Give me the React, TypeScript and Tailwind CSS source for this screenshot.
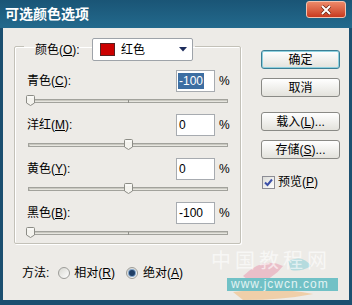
import React from "react";

const font = { fontFamily: '"Liberation Sans", "Noto Sans CJK SC", sans-serif' };

interface rowprops {
  name: string;
  keyChar: string;
  value: number;
  selected?: boolean;
}

const Thumb = () => (
  <svg width="9" height="11" viewBox="0 0 9 11" className="absolute top-0">
    <path d="M0.5 1.5 Q0.5 0.5 1.5 0.5 H7.5 Q8.5 0.5 8.5 1.5 V8 L4.5 10.5 L0.5 8 Z" fill="#f4f3ee" stroke="#8c8c86" />
    <path d="M1.5 2 H7.5" stroke="#ffffff" />
  </svg>
);

const SliderRow = ({ name, keyChar, value, selected }: rowprops) => {
  return (
    <div className="flex flex-col">
      <div className="flex items-center h-[22px] pl-[12px] pr-[10px] text-[12px] text-black">
        <span className="flex-1">
          {name}(<span className="underline">{keyChar}</span>):
        </span>
        <div className="w-[39px] h-[22px] bg-white border border-[#a7abb0] flex items-center px-[1px]">
          {selected ? (
            <span className="bg-[#3d6ea2] text-white px-[1px] leading-[16px]">{value}</span>
          ) : (
            <span className="px-[1px] leading-[16px]">{value}</span>
          )}
        </div>
        <span className="ml-[4px] w-[11px]">%</span>
      </div>
      <div className="relative ml-[11px] w-[204px] h-[11px] mt-[3px]">
        <div className="absolute left-[2px] right-[2px] top-[4px] h-[4px] border border-[#a2a29c] bg-[#e6e5df] shadow-[inset_1px_1px_0_#c9c8c0]" />
        <div className="absolute left-[102px] top-[5px] w-[1px] h-[3px] bg-[#8e8e88]" />
        <div className="absolute top-0" style={{ left: (value + 100) * 0.98 }}>
          <Thumb />
        </div>
      </div>
    </div>
  );
};

const Btn = ({ children, primary }: { children: React.ReactNode; primary?: boolean }) => (
  <div
    className={
      primary
        ? "h-[19px] w-[79px] rounded-[3px] border border-[#3b7f95] shadow-[inset_0_0_0_1px_#8fd0de] bg-gradient-to-b from-[#ffffff] to-[#e3e2dc] flex items-center justify-center text-[12px] text-black"
        : "h-[19px] w-[79px] rounded-[3px] border border-[#8a8a86] bg-gradient-to-b from-[#ffffff] to-[#e3e2dc] flex items-center justify-center text-[12px] text-black"
    }
  >
    {children}
  </div>
);

const Radio = ({ checked }: { checked?: boolean }) => (
  <div className="w-[12px] h-[12px] rounded-full border border-[#9c9c98] bg-gradient-to-br from-[#d8d8d2] to-[#ffffff] flex items-center justify-center">
    {checked && <div className="w-[6px] h-[6px] rounded-full bg-[#1f3e66] shadow-[0_0_0_1px_#7fa2c8]" />}
  </div>
);

export default function App() {
  return (
    <div className="w-[352px] h-[305px] flex flex-col bg-[#1b4f70] overflow-hidden" style={font}>
      <div className="h-[28px] flex items-start justify-between pl-[5px] pr-[6px] bg-gradient-to-b from-[#1a5576] to-[#236a8d]">
        <span className="mt-[6px] text-[14px] leading-[17px] font-bold text-white">可选颜色选项</span>
        <div className="mt-[1px] w-[40px] h-[17px] rounded-[3px] border border-[#f3c2b0] bg-gradient-to-b from-[#ec8868] to-[#c9381d] flex items-center justify-center">
          <svg width="12" height="10" viewBox="0 0 12 10">
            <path d="M2 1 L10 9 M10 1 L2 9" stroke="#6b2210" strokeWidth="3.4" />
            <path d="M2 1 L10 9 M10 1 L2 9" stroke="#ffffff" strokeWidth="2" />
          </svg>
        </div>
      </div>
      <div className="relative flex-1 mx-[3px] mb-[5px] bg-[#edebe7] flex text-[12px] text-black">
        <div className="flex flex-col pl-[11px]">
          <fieldset className="mt-[4px] w-[227px] border border-[#c3c1b8] rounded-[2px] shadow-[inset_1px_1px_0_#ffffff,1px_1px_0_#ffffff] pt-[9px] pb-[5px]">
            <legend className="ml-[9px] pt-[6px] pl-[11px] pr-[2px]">
              <div className="flex items-center">
                <span className="w-[57px]">
                  颜色(<span className="underline">O</span>):
                </span>
                <div className="w-[101px] h-[23px] rounded-[2px] border border-[#9ea3a9] bg-white flex items-center pl-[7px] pr-[5px]">
                  <div className="w-[15px] h-[13px] bg-[#cc0000] border border-[#5a2020]" />
                  <span className="ml-[6px] flex-1">红色</span>
                  <svg width="8" height="5" viewBox="0 0 8 5">
                    <path d="M0 0 H8 L4 4.5 Z" fill="#1d2c5c" />
                  </svg>
                </div>
              </div>
            </legend>
            <div className="flex flex-col gap-[8px]">
              <SliderRow name="青色" keyChar="C" value={-100} selected />
              <SliderRow name="洋红" keyChar="M" value={0} />
              <SliderRow name="黄色" keyChar="Y" value={0} />
              <SliderRow name="黑色" keyChar="B" value={-100} />
            </div>
          </fieldset>
          <div className="mt-[21px] ml-[8px] h-[16px] flex items-center">
            <span>方法:</span>
            <div className="ml-[9px]">
              <Radio />
            </div>
            <span className="ml-[4px]">
              相对(<span className="underline">R</span>)
            </span>
            <div className="ml-[11px]">
              <Radio checked />
            </div>
            <span className="ml-[5px]">
              绝对(<span className="underline">A</span>)
            </span>
          </div>
        </div>
        <div className="ml-[20px] mt-[22px] flex flex-col">
          <Btn primary>确定</Btn>
          <div className="mt-[9px]">
            <Btn>取消</Btn>
          </div>
          <div className="mt-[15px]">
            <Btn>
              载入(<span className="underline">L</span>)...
            </Btn>
          </div>
          <div className="mt-[9px]">
            <Btn>
              存储(<span className="underline">S</span>)...
            </Btn>
          </div>
          <div className="mt-[14px] flex items-center pl-[1px]">
            <div className="w-[13px] h-[13px] border border-[#8c8c94] bg-gradient-to-br from-[#dcdcd8] to-[#ffffff] flex items-center justify-center">
              <svg width="9" height="9" viewBox="0 0 9 9">
                <path d="M1 4.5 L3.5 7 L8 1.5" stroke="#3b4fa8" strokeWidth="2" fill="none" />
              </svg>
            </div>
            <span className="ml-[3px]">
              预览(<span className="underline">P</span>)
            </span>
          </div>
        </div>
        <div className="absolute left-[200px] top-[208px] w-[140px] h-[64px] pointer-events-none">
          <svg width="140" height="64" viewBox="0 0 140 64" className="absolute left-0 top-0">
            <path d="M40 40 Q60 20 80 30 Q70 44 50 48 Z" fill="#e89ab0" opacity="0.55" />
            <path d="M85 25 Q100 18 108 30 Q98 36 88 34 Z" fill="#8fd0d8" opacity="0.6" />
            <path d="M30 56 Q70 50 110 58 Q80 64 40 64 Z" fill="#f2b46c" opacity="0.5" />
          </svg>
          <div className="absolute left-[8px] top-[14px] text-[20px] leading-[22px] text-white opacity-60 tracking-[4px]">中国教程网</div>
          <div className="absolute left-[24px] top-[42px] w-[111px] h-[13px] bg-[#71c1c6] text-[#e3f3f3] text-[12px] leading-[13px] tracking-[1px] pl-[4px]">
            www.jcwcn.com
          </div>
        </div>
      </div>
    </div>
  );
}
